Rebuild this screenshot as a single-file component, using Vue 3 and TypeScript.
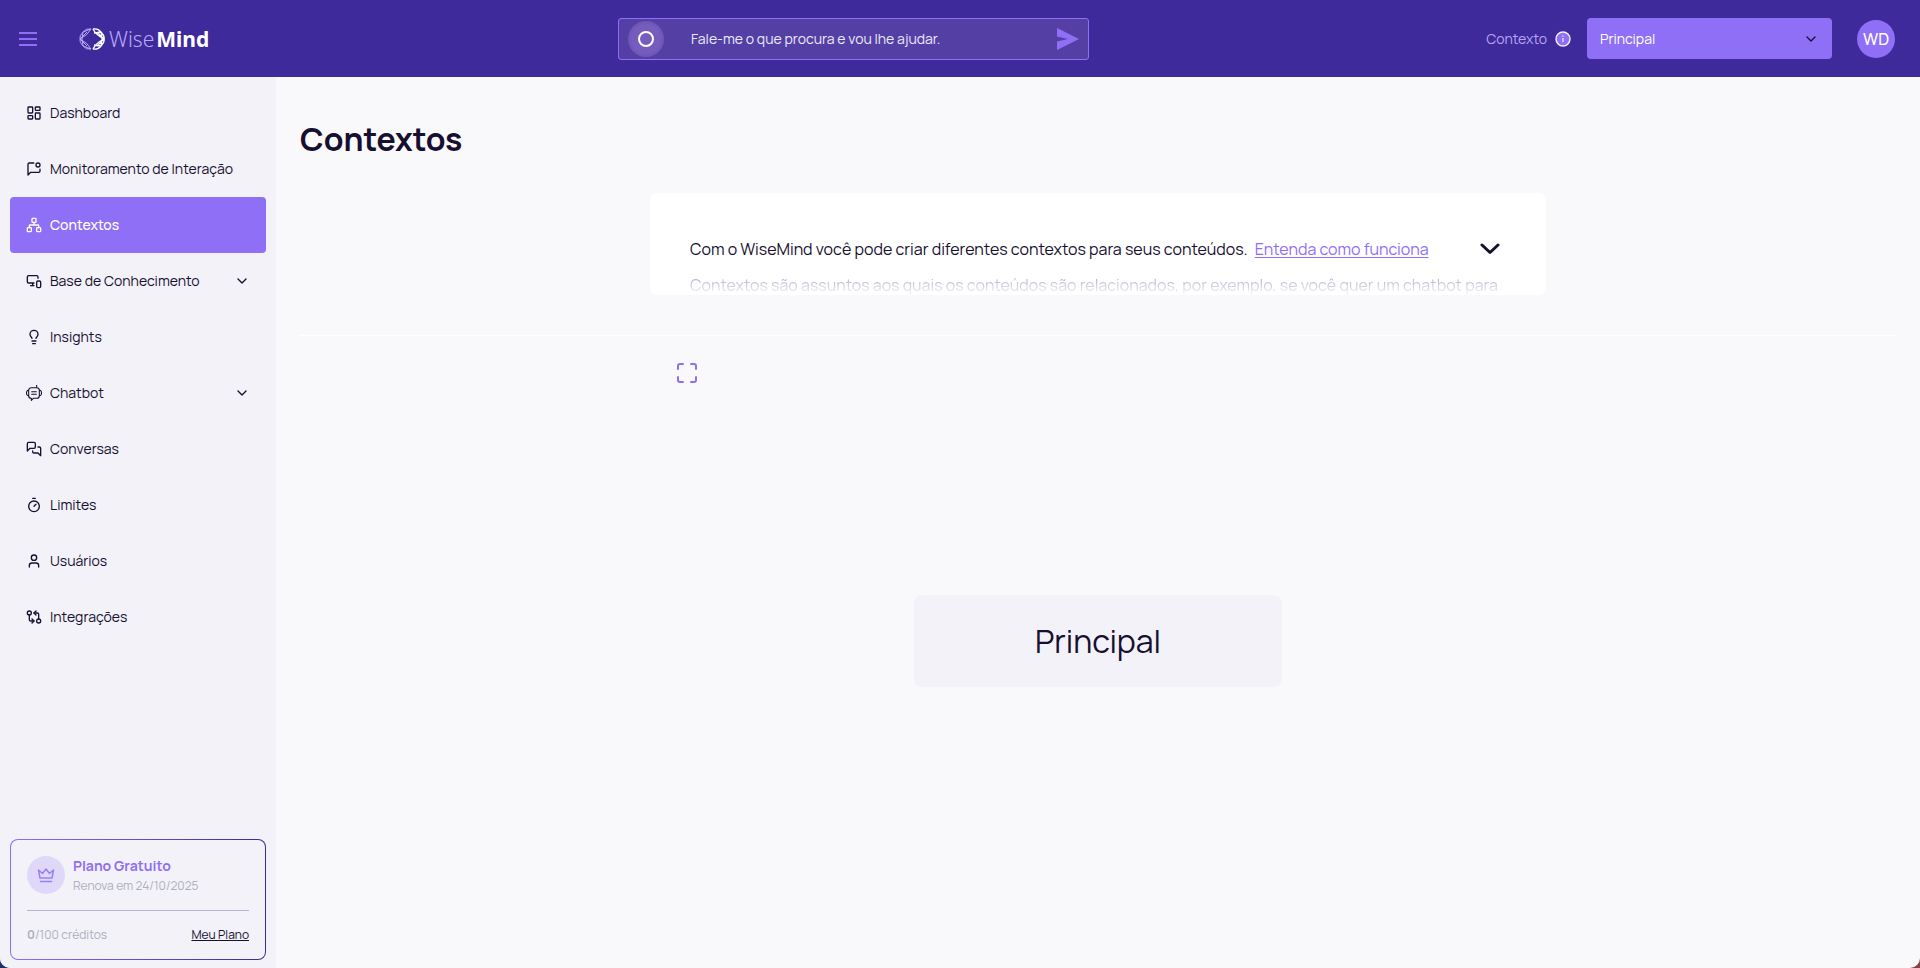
<script setup lang="ts">
import { ref } from 'vue'

interface NavItem {
  label: string
  icon: string
  expandable?: boolean
}

const icons: Record<string, string> = {
  dashboard:
    '<rect x="3" y="3" width="7" height="9" rx="1"/><rect x="14" y="3" width="7" height="5" rx="1"/><rect x="14" y="12" width="7" height="9" rx="1"/><rect x="3" y="16" width="7" height="5" rx="1"/>',
  monitor:
    '<path d="M11.7 3H5a2 2 0 0 0-2 2v16l4-4h12a2 2 0 0 0 2-2v-2.700"/><circle cx="18" cy="6" r="3"/>',
  network:
    '<rect x="16" y="16" width="6" height="6" rx="1"/><rect x="2" y="16" width="6" height="6" rx="1"/><rect x="9" y="2" width="6" height="6" rx="1"/><path d="M5 16v-3a1 1 0 0 1 1-1h12a1 1 0 0 1 1 1v3M12 12V8"/>',
  devices:
    '<path d="M18 8V6a2 2 0 0 0-2-2H4a2 2 0 0 0-2 2v7a2 2 0 0 0 2 2h8M10 19v-3.900 3.100M7 19h5"/><rect width="6" height="10" x="16" y="12" rx="2"/>',
  bulb:
    '<path d="M15 14c.2-1 .7-1.700 1.500-2.500 1-.9 1.500-2.200 1.500-3.500A6 6 0 0 0 6 8c0 1 .2 2.200 1.500 3.500.7.7 1.300 1.500 1.500 2.500M9 18h6M10 22h4"/>',
  bot:
    '<path stroke-width="1.600" d="M16 0v4M8 4h8a4 4 0 0 1 4 4v8a4 4 0 0 1-4 4h-5l-3 3v-3a4 4 0 0 1-4-4V8a4 4 0 0 1 4-4ZM4 7.500c-4.500 1-4.500 8 0 9M20 7.500c4.500 1 4.500 8 0 9M8.500 10h7M8.500 14h7"/>',
  chats:
    '<path d="M14 9a2 2 0 0 1-2 2H6l-4 4V4a2 2 0 0 1 2-2h8a2 2 0 0 1 2 2zM18 9h2a2 2 0 0 1 2 2v11l-4-4h-6a2 2 0 0 1-2-2v-1"/>',
  timer:
    '<path d="M10 2h4M12 14l3-3"/><circle cx="12" cy="14" r="8"/>',
  user: '<circle cx="12" cy="7" r="4"/><path d="M19 21v-2a4 4 0 0 0-4-4H9a4 4 0 0 0-4 4v2"/>',
  compare:
    '<circle cx="5" cy="6" r="3"/><path d="M12 6h5a2 2 0 0 1 2 2v7"/><path d="m15 9-3-3 3-3"/><circle cx="19" cy="18" r="3"/><path d="M12 18H7a2 2 0 0 1-2-2V9"/><path d="m9 15 3 3-3 3"/>',
}

const items: NavItem[] = [
  { label: 'Dashboard', icon: 'dashboard' },
  { label: 'Monitoramento de Interação', icon: 'monitor' },
  { label: 'Contextos', icon: 'network' },
  { label: 'Base de Conhecimento', icon: 'devices', expandable: true },
  { label: 'Insights', icon: 'bulb' },
  { label: 'Chatbot', icon: 'bot', expandable: true },
  { label: 'Conversas', icon: 'chats' },
  { label: 'Limites', icon: 'timer' },
  { label: 'Usuários', icon: 'user' },
  { label: 'Integrações', icon: 'compare' },
]

const active = ref('Contextos')
const query = ref('')
const context = ref('Principal')
</script>

<template>
  <div class="app">
    <header class="topbar">
      <div class="top-left">
        <button class="menu" type="button" aria-label="Menu">
          <svg width="18" height="16" viewBox="0 0 18 16" stroke="currentColor" stroke-width="2">
            <path d="M0 2h18M0 8h18M0 14h18" />
          </svg>
        </button>
        <a class="logo" href="#" aria-label="WiseMind">
          <svg width="26" height="22" viewBox="0 0 26 22" fill="none">
            <path
              stroke="#b8aaf8"
              d="M12 1Q7 0 4 4 0 8 1 11 0 14 4 18q3 4 8 3M12 1Q9 7 1 11q8 4 11 10M4 4Q2 11 4 18M4 4l8-3M4 18l8 3M1 11 8 4M1 11l7 7"
            />
            <path
              stroke="#fff"
              stroke-width="1.300"
              d="M14 1q5-1 8 3 4 4 3 7 1 3-3 7-3 4-8 3M14 1q3 6 11 10-8 4-11 10M22 4q2 7 0 14M15 5l7-1M15 17l7 1M25 11l-7-7M25 11l-7 7"
            />
          </svg>
          <span class="wordmark"><span class="wise">Wise</span><b>Mind</b></span>
        </a>
      </div>

      <form class="search" @submit.prevent>
        <span class="orb"><span class="ring"></span></span>
        <input v-model="query" type="text" aria-label="Busca" placeholder="Fale-me o que procura e vou lhe ajudar." />
        <button class="send" type="submit" aria-label="Enviar">
          <svg width="22" height="22" viewBox="0 0 22 22" fill="currentColor">
            <path d="M0 0 22 11 0 22V13.500L11 11 0 8.500Z" />
          </svg>
        </button>
      </form>

      <div class="top-right">
        <label class="ctx-label" for="context">Contexto</label>
        <svg class="info" width="16" height="16" viewBox="0 0 16 16">
          <circle cx="8" cy="8" r="7" fill="#8f6ff6" stroke="#f2f0fa" stroke-width="1.400" />
          <path d="M8 7v4M8 4.500v1.300" stroke="#d9cffc" stroke-width="1.500" />
        </svg>
        <span class="select-wrap">
          <select id="context" v-model="context">
            <option>Principal</option>
          </select>
          <svg class="select-chevron" width="16" height="16" viewBox="0 0 24 24"><path d="m6 9 6 6 6-6" /></svg>
        </span>
        <button class="avatar" type="button">WD</button>
      </div>
    </header>

    <div class="body">
      <aside class="sidebar">
        <nav>
          <a
            v-for="item in items"
            :key="item.label"
            href="#"
            class="nav-item"
            :class="{ active: item.label === active }"
            @click.prevent="active = item.label"
          >
            <svg class="icon" width="16" height="16" viewBox="0 0 24 24" v-html="icons[item.icon]"></svg>
            <span class="nav-label">{{ item.label }}</span>
            <svg v-if="item.expandable" class="icon" width="16" height="16" viewBox="0 0 24 24">
              <path d="m6 9 6 6 6-6" />
            </svg>
          </a>
        </nav>

        <section class="plan">
          <div class="plan-head">
            <span class="crown">
              <svg width="18" height="18" viewBox="0 0 18 18">
                <path d="M3 12 1.500 4l4 3.500L9 3l3.500 4.500 4-3.500L15 12ZM3.500 15.500h11" />
              </svg>
            </span>
            <div>
              <div class="plan-name">Plano Gratuito</div>
              <div class="plan-date">Renova em 24/10/2025</div>
            </div>
          </div>
          <div class="plan-foot">
            <span><b>0</b>/100 créditos</span>
            <a href="#">Meu Plano</a>
          </div>
        </section>
      </aside>

      <main class="content">
        <h1>Contextos</h1>
        <section class="notice">
          <div class="notice-row">
            <p>Com o WiseMind você pode criar diferentes contextos para seus conteúdos.</p>
            <a href="#">Entenda como funciona</a>
            <button type="button" aria-label="Expandir">
              <svg width="20" height="12" viewBox="0 0 20 12"><path d="m2 2 8 7.500L18 2" /></svg>
            </button>
          </div>
          <p class="preview">Contextos são assuntos aos quais os conteúdos são relacionados, por exemplo, se você quer um chatbot para</p>
        </section>
        <hr />
        <section class="canvas">
          <button class="fit" type="button" aria-label="Ajustar à tela">
            <svg width="24" height="24" viewBox="0 0 24 24">
              <path d="M8 3H5a2 2 0 0 0-2 2v3M21 8V5a2 2 0 0 0-2-2h-3M3 16v3a2 2 0 0 0 2 2h3M16 21h3a2 2 0 0 0 2-2v-3" />
            </svg>
          </button>
          <div class="stage">
            <button class="node" type="button">Principal</button>
          </div>
        </section>
      </main>
    </div>
  </div>
</template>

<style>
body {
  margin: 0;
  background: linear-gradient(90deg, #1b2f6b, #8a4048);
}
</style>

<style scoped>
* {
  box-sizing: border-box;
}

.app {
  display: flex;
  flex-direction: column;
  min-height: 100vh;
  overflow: hidden;
  border-radius: 0 0 10px 10px;
  background: #f9f9fc;
  color: #160f30;
  font-family: Manrope, Inter, "Liberation Sans", sans-serif;
  font-size: 14px;
}

button {
  padding: 0;
  border: 0;
  background: none;
  color: inherit;
  font: inherit;
  cursor: pointer;
}

svg {
  display: block;
  flex: none;
}

.topbar {
  display: flex;
  align-items: center;
  justify-content: space-between;
  height: 77px;
  padding: 0 25px 0 19px;
  background: #3f2a9b;
}

.top-left {
  display: flex;
  align-items: center;
  gap: 42px;
  min-width: 202px;
}

.menu {
  color: #8f6ff6;
}

.logo {
  display: flex;
  align-items: center;
  gap: 4px;
  color: #fff;
  text-decoration: none;
}

.wordmark {
  display: flex;
  gap: 2px;
  font-family: "Noto Sans", sans-serif;
  font-size: 21px;
  line-height: 24px;
}

.wise {
  color: #b8aaf8;
  font-weight: 300;
}

.search {
  display: flex;
  align-items: center;
  width: 471px;
  height: 42px;
  padding: 0 9px;
  border: 1px solid #8f6ff6;
  border-radius: 3px;
  background: #5440a5;
}

.orb {
  display: grid;
  place-items: center;
  width: 36px;
  height: 36px;
  border-radius: 50%;
  background: radial-gradient(#755cbd 55%, #6751b1 80%, #5d49ab);
}

.ring {
  width: 16px;
  height: 16px;
  border: 2px solid #fff;
  border-radius: 50%;
}

.search input {
  flex: 1;
  min-width: 0;
  padding: 0 27px;
  border: 0;
  outline: 0;
  background: none;
  color: #ece8fb;
  font: inherit;
}

.search input::placeholder {
  color: #ece8fb;
  opacity: 1;
}

.send {
  color: #8f6ff6;
}

.top-right {
  display: flex;
  align-items: center;
}

.ctx-label {
  margin-right: 8px;
  color: #b6a5f5;
}

.info {
  margin-right: 16px;
}

.select-wrap {
  display: grid;
  align-items: center;
  width: 245px;
  margin-right: 25px;
}

.select-wrap > * {
  grid-area: 1 / 1;
}

.select-chevron {
  justify-self: end;
  margin-right: 13px;
  pointer-events: none;
}

select {
  width: 100%;
  height: 41px;
  padding: 0 13px;
  border: 0;
  border-radius: 4px;
  appearance: none;
  background: #8f6ff6;
  color: #fff;
  font: inherit;
}

.avatar {
  width: 38px;
  height: 38px;
  border-radius: 50%;
  background: #8f6ff6;
  color: #fff;
  font-size: 16px;
  font-weight: 500;
}

.body {
  display: flex;
  flex: 1;
}

.sidebar {
  display: flex;
  flex-direction: column;
  justify-content: space-between;
  width: 276px;
  padding: 8px 10px;
  background: #f3f2f8;
}

.nav-item {
  display: flex;
  align-items: center;
  gap: 8px;
  height: 56px;
  padding: 0 16px;
  border-radius: 4px;
  color: inherit;
  text-decoration: none;
}

.nav-item.active {
  background: #8f6ff6;
  color: #fff;
  font-weight: 500;
}

.nav-label {
  flex: 1;
  padding-bottom: 2px;
}

.icon,
.select-chevron,
.crown svg,
.notice svg,
.fit svg {
  fill: none;
  stroke: currentColor;
  stroke-width: 2;
  stroke-linecap: round;
  stroke-linejoin: round;
}

.plan {
  padding: 16px 16px 15px;
  border: 1px solid transparent;
  border-radius: 8px;
  background:
    linear-gradient(#f3f2f8, #f3f2f8) padding-box,
    linear-gradient(90deg, #8f6ff6, #3f2a9b) border-box;
}

.plan-head {
  display: flex;
  gap: 8px;
  padding-bottom: 14px;
  border-bottom: 1px solid #b9b4d6;
}

.crown {
  display: grid;
  place-items: center;
  width: 38px;
  height: 38px;
  border-radius: 50%;
  background: #dfd8f8;
  color: #9b7ff5;
}

.crown svg {
  stroke-width: 1.5;
}

.plan-name {
  color: #8f6ff6;
  font-weight: 700;
  line-height: 20px;
}

.plan-date {
  line-height: 20px;
}

.plan-foot {
  display: flex;
  justify-content: space-between;
  padding-top: 15px;
  line-height: 18px;
}

.plan-date,
.plan-foot {
  color: #acb0bc;
  font-size: 12px;
}

.plan-foot a {
  color: #160f30;
}

.content {
  display: flex;
  flex: 1;
  flex-direction: column;
  min-width: 0;
  padding: 40px 24px 0;
}

h1 {
  margin: 0 0 32px;
  font-size: 32px;
  font-weight: 700;
  line-height: 44px;
}

.notice {
  align-self: center;
  width: 100%;
  max-width: 896px;
  height: 102px;
  padding: 40px;
  overflow: hidden;
  border-radius: 8px;
  background: #fff;
  font-size: 16px;
}

.notice p {
  margin: 0;
  white-space: nowrap;
}

.notice-row {
  display: flex;
  align-items: center;
  gap: 7px;
  line-height: 32px;
}

.notice-row a {
  color: #8f6ff6;
  text-underline-offset: 2px;
  white-space: nowrap;
}

.notice-row button {
  margin: 0 6px 0 auto;
}

.notice svg {
  stroke-width: 3;
}

.notice .preview {
  background: linear-gradient(#b0aad0 30%, #fff 80%);
  background-clip: text;
  color: transparent;
  line-height: 40px;
}

hr {
  width: 100%;
  height: 1px;
  margin: 40px 0 0;
  border: 0;
  background: #fff;
}

.canvas {
  display: flex;
  flex: 1;
  flex-direction: column;
  align-self: center;
  width: 100%;
  max-width: 896px;
  padding: 25px 25px 0;
}

.fit {
  align-self: flex-start;
  color: #8f6ff6;
}

.stage {
  display: grid;
  flex: 1;
  place-items: center;
  padding-bottom: 72px;
}

.node {
  width: 368px;
  height: 92px;
  border-radius: 8px;
  background: #f3f2f8;
  font-size: 32px;
}
</style>
